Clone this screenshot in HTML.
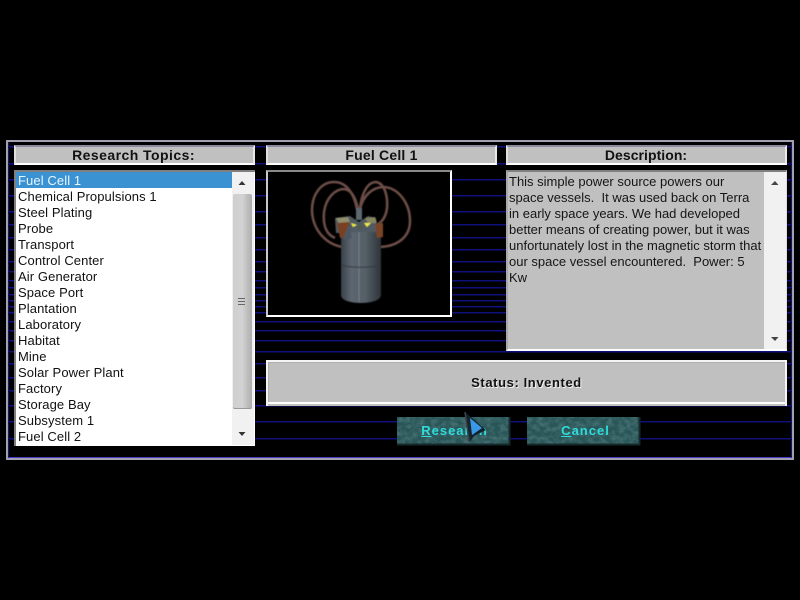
<!DOCTYPE html>
<html><head><meta charset="utf-8">
<style>
html,body{margin:0;padding:0;background:#000;}
body{width:800px;height:600px;position:relative;overflow:hidden;font-family:"Liberation Sans",Arial,sans-serif;color:#000;}
.a{position:absolute;box-sizing:border-box;}
.hd{background:#c0c0c0;border-top:2px solid #8a8a9c;border-left:2px solid #e0e0e0;border-right:2px solid #e8e8e8;border-bottom:2px solid #fff;text-align:center;font-weight:bold;font-size:14px;line-height:17px;color:#111;}
.rows div{height:16px;line-height:17px;padding-left:2px;font-size:13px;white-space:nowrap;letter-spacing:.1px;color:#111;}
.rows .sel{background:#3a92d2;color:#e8f6ff;}
.ln{position:absolute;left:8px;width:784px;height:1px;background:#10107c;box-shadow:0 1px 0 #08083c;}
.btnt{position:absolute;color:#2fdcdc;font-weight:bold;font-size:13px;letter-spacing:1px;line-height:16px;text-align:center;}
u{text-decoration:underline;}
</style></head><body>

<!-- frame -->
<div class="a" style="left:6px;top:140px;width:788px;height:320px;border:2px solid #a0a0b0;background:#000;"></div>
<div class="a" style="left:8px;top:142px;width:784px;height:316px;border-bottom:1px solid #4a3cc0;border-left:1px solid #14146c;border-right:1px solid #14146c;"></div>

<!-- scan lines -->
<div class="ln" style="top:146px"></div><div class="ln" style="top:163px"></div>
<div class="ln" style="top:179px"></div><div class="ln" style="top:195px"></div>
<div class="ln" style="top:211px"></div><div class="ln" style="top:224px"></div>
<div class="ln" style="top:237px"></div><div class="ln" style="top:249px"></div>
<div class="ln" style="top:261px"></div><div class="ln" style="top:271px"></div>
<div class="ln" style="top:280px"></div><div class="ln" style="top:287px"></div>
<div class="ln" style="top:294px"></div><div class="ln" style="top:300px"></div>
<div class="ln" style="top:306px"></div><div class="ln" style="top:312px"></div>
<div class="ln" style="top:321px"></div><div class="ln" style="top:330px"></div>
<div class="ln" style="top:340px"></div><div class="ln" style="top:351px"></div>
<div class="ln" style="top:363px"></div><div class="ln" style="top:377px"></div>
<div class="ln" style="top:390px"></div><div class="ln" style="top:405px"></div>
<div class="ln" style="top:421px"></div><div class="ln" style="top:438px"></div>

<!-- headers -->
<div class="a hd" style="left:14px;top:145px;width:241px;height:20px;letter-spacing:.45px;padding-right:2px;">Research Topics:</div>
<div class="a hd" style="left:266px;top:145px;width:231px;height:20px;letter-spacing:.2px;">Fuel Cell 1</div>
<div class="a hd" style="left:506px;top:145px;width:281px;height:20px;letter-spacing:.05px;padding-right:1px;">Description:</div>

<!-- list -->
<div class="a" style="left:14px;top:170px;width:241px;height:276px;background:#fff;border-top:2px solid #808080;border-left:2px solid #808080;overflow:hidden;">
  <div class="a rows" style="left:0;top:0;width:216px;">
    <div class="sel">Fuel Cell 1</div>
    <div>Chemical Propulsions 1</div>
    <div>Steel Plating</div>
    <div>Probe</div>
    <div>Transport</div>
    <div>Control Center</div>
    <div>Air Generator</div>
    <div>Space Port</div>
    <div>Plantation</div>
    <div>Laboratory</div>
    <div>Habitat</div>
    <div>Mine</div>
    <div>Solar Power Plant</div>
    <div>Factory</div>
    <div>Storage Bay</div>
    <div>Subsystem 1</div>
    <div>Fuel Cell 2</div>
  </div>
</div>
<div class="a" style="left:232px;top:172px;width:22px;height:273px;background:#f1f1f1;"></div>
<div class="a" style="left:233px;top:194px;width:19px;height:215px;background:linear-gradient(90deg,#cfcfcf,#d2d2d2 50%,#adadad);border-radius:2px;box-shadow:inset 0 -1px 0 #999;"></div>
<svg class="a" style="left:232px;top:172px;" width="22" height="273">
  <path d="M6.5 13 L10 9 L13.5 13Z" fill="#333"/>
  <path d="M6.5 260 L13.5 260 L10 264Z" fill="#333"/>
  <path d="M6 126.5H13M6 129.5H13M6 132.5H13" stroke="#666" stroke-width="1"/>
</svg>

<!-- picture -->
<div class="a" style="left:266px;top:170px;width:186px;height:147px;background:#000;border-top:2px solid #8a8a8a;border-left:2px solid #c8c8c8;border-right:2px solid #fff;border-bottom:2px solid #fff;"></div>
<svg class="a" style="left:0;top:0;" width="800" height="600" viewBox="0 0 800 600">
  <defs>
    <filter id="sb"><feGaussianBlur stdDeviation=".6"/></filter>
    <linearGradient id="cy" x1="0" x2="1" y1="0" y2="0">
      <stop offset="0" stop-color="#3a4048"/><stop offset=".25" stop-color="#5c6670"/>
      <stop offset=".6" stop-color="#566068"/><stop offset="1" stop-color="#2e343a"/>
    </linearGradient>
    <filter id="st" x="0" y="0" width="100%" height="100%">
      <feTurbulence type="fractalNoise" baseFrequency=".16 .22" numOctaves="3" seed="5"/>
      <feColorMatrix values="0 0 0 0 .06  0 0 0 0 .16  0 0 0 0 .17  2.4 0 0 0 -.9"/>
      <feComposite in2="SourceGraphic" operator="in" result="n"/>
      <feMerge><feMergeNode in="SourceGraphic"/><feMergeNode in="n"/></feMerge>
    </filter>
  </defs>
  <g filter="url(#sb)" fill="none" stroke="#6c4e46" stroke-width="2.6">
    <path d="M343 247C328 245 313 232 312 211C312 193 322 182 334 182C347 182 354 194 357 209"/>
    <path d="M335 238C325 234 323 224 324 212C326 198 335 189 344 189C352 190 356 198 358 210"/>
    <path d="M360 208C362 192 368 182 376 182C384 183 388 195 387 208C386 217 382 222 377 225"/>
    <path d="M360 209C363 196 372 187 384 187C399 188 410 204 410 221C410 236 399 246 380 247"/>
  </g>
  <g filter="url(#sb)">
    <path d="M356 208H362V220H356Z" fill="#5c6870"/>
    <path d="M335 218L350 216L359 222L368 216L376 218L377 233L336 233Z" fill="#505a62"/>
    <path d="M336 218L348 217L350 222L339 224Z" fill="#8f8f6c"/>
    <path d="M365 218L375 217L377 223L368 223Z" fill="#85855f"/>
    <path d="M341 232H381V295C381 301 369 303 361 303C352 303 341 301 341 295Z" fill="url(#cy)"/>
    <path d="M359 232V302" stroke="#747f88" stroke-width="1"/>
    <path d="M341 265C350 268 371 268 381 265" stroke="#333a40" stroke-width="1" fill="none"/>
    <path d="M337 223L349 222L351 238L340 238Z" fill="#7a3f22"/>
    <path d="M375 224L383 223L383 237L377 238Z" fill="#7a4426"/>
    <path d="M349 224L352 238L345 240L343 238Z" fill="#4c5660"/>
    <path d="M351 223L357 225L353 227Z" fill="#f0ec40"/>
    <path d="M364 223L371 223L367 227Z" fill="#f0ec40"/>
    <path d="M358 226L363 226L360 229Z" fill="#5a5a28"/>
  </g>
</svg>

<!-- description -->
<div class="a" style="left:506px;top:170px;width:281px;height:181px;background:#c0c0c0;border-top:2px solid #808080;border-left:2px solid #a8a8a8;border-bottom:2px solid #fff;border-right:1px solid #ddd;">
  <div class="a" style="left:1px;top:2px;width:256px;font-size:13px;line-height:16px;color:#151515;white-space:pre;">This simple power source powers our
space vessels.  It was used back on Terra
in early space years. We had developed
better means of creating power, but it was
unfortunately lost in the magnetic storm that
our space vessel encountered.  Power: 5
Kw</div>
  <div class="a" style="left:256px;top:0;width:22px;height:177px;background:#f1f1f1;"></div>
</div>
<svg class="a" style="left:764px;top:172px;" width="22" height="177">
  <path d="M7 13 L11 9 L14.5 13Z" fill="#444"/>
  <path d="M7 165 L14.5 165 L11 169Z" fill="#444"/>
</svg>

<!-- status -->
<div class="a" style="left:266px;top:360px;width:521px;height:46px;background:#c0c0c0;border:2px solid #f4f4f4;border-bottom:0;">
  <div class="a" style="left:0;top:0;right:0;height:1px;background:#b0b0b0;"></div>
  <div class="a" style="left:0;top:0;bottom:4px;width:1px;background:#b0b0b0;"></div>
  <div class="a" style="left:0;right:0;bottom:2px;height:2px;background:#fff;"></div>
  <div class="a" style="left:0;width:517px;top:12px;text-align:center;font-weight:bold;font-size:13px;letter-spacing:.6px;line-height:17px;color:#111;text-shadow:1px 1px 0 #f4f4f4;">Status: Invented</div>
</div>

<!-- buttons -->
<svg class="a" style="left:0;top:0;" width="800" height="600">
  <rect x="397" y="417" width="113" height="28" fill="#2a5658" filter="url(#st)"/>
  <rect x="527" y="417" width="113" height="28" fill="#2a5658" filter="url(#st)"/>
  <path d="M397 444.5H509.5V417" fill="none" stroke="#16292b" stroke-width="2"/>
  <path d="M527 444.5H639.5V417" fill="none" stroke="#16292b" stroke-width="2"/>
</svg>
<div class="btnt" style="left:398px;top:423px;width:113px;"><u>R</u>esearch</div>
<div class="btnt" style="left:529px;top:423px;width:113px;"><u>C</u>ancel</div>

<!-- cursor -->
<svg class="a" style="left:0;top:0;" width="800" height="600">
  <path d="M465 412L470 442L474 436L486 430Z" fill="#14242c"/>
  <path d="M465 412L469 442" stroke="#3e4248" stroke-width="1.5" fill="none"/>
  <path d="M470 418L482 428L472 435Z" fill="#3a98e8"/>
</svg>

</body></html>
